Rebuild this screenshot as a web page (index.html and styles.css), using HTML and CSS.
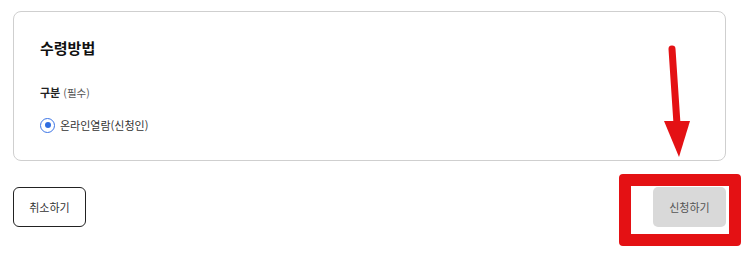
FILE: index.html
```html
<!DOCTYPE html>
<html lang="ko">
<head>
<meta charset="utf-8">
<link rel="stylesheet" href="styles.css">
</head>
<body>
<div class="page">
  <section class="card">
    <h2 class="title">수령방법</h2>
    <div class="field-label">구분 <span class="req">(필수)</span></div>
    <label class="radio-row">
      <span class="radio"><span class="dot"></span></span>
      <span class="radio-text">온라인열람(신청인)</span>
    </label>
  </section>
  <div class="actions">
    <button class="btn btn-cancel">취소하기</button>
    <button class="btn btn-submit">신청하기</button>
  </div>
</div>
<div class="highlight"></div>
<svg class="arrow" width="745" height="260" viewBox="0 0 745 260">
  <line x1="672" y1="49" x2="677" y2="124" stroke="#e41114" stroke-width="7" stroke-linecap="round"/>
  <polygon points="664,121 690,121 679,157" fill="#e41114"/>
</svg>
</body>
</html>
```

FILE: styles.css
```css
html, body {
  margin: 0;
  padding: 0;
  background: #fff;
}
body {
  font-family: "Noto Sans CJK KR", "Noto Sans", sans-serif;
  color: #222;
  position: relative;
  width: 745px;
  height: 260px;
  overflow: hidden;
}
.page {
  padding: 11px 0 0 13px;
  width: 713px;
}
.card {
  box-sizing: border-box;
  height: 150px;
  border: 1px solid #cfcfcf;
  border-radius: 8px;
  padding: 25px 26px 0 26px;
}
.title {
  margin: 0;
  font-size: 15px;
  font-weight: 700;
  line-height: 22px;
  color: #111;
}
.field-label {
  margin-top: 25px;
  font-size: 11px;
  font-weight: 700;
  line-height: 16px;
  color: #222;
}
.req {
  font-size: 10.5px;
  font-weight: 400;
  color: #555;
}
.radio-row {
  display: flex;
  align-items: center;
  gap: 5px;
  margin-top: 16px;
  margin-left: 0;
}
.radio {
  box-sizing: border-box;
  width: 15px;
  height: 15px;
  border: 1.5px solid #3b74e6;
  border-radius: 50%;
  display: flex;
  align-items: center;
  justify-content: center;
}
.dot {
  width: 6px;
  height: 6px;
  border-radius: 50%;
  background: #2f6de0;
}
.radio-text {
  font-size: 11px;
  line-height: 16px;
  color: #333;
}
.actions {
  display: flex;
  justify-content: space-between;
  margin-top: 26px;
}
.btn {
  box-sizing: border-box;
  width: 73px;
  height: 40px;
  font-family: inherit;
  font-size: 11px;
  border-radius: 6px;
  padding: 0;
}
.btn-cancel {
  background: #fff;
  border: 1px solid #222;
  color: #333;
}
.btn-submit {
  background: #d9d9d9;
  border: none;
  color: #555;
  border-radius: 5px;
}
.highlight {
  position: absolute;
  left: 619px;
  top: 174px;
  width: 122px;
  height: 72px;
  box-sizing: border-box;
  border: 12px solid #e41114;
  border-radius: 4px;
}
.arrow {
  position: absolute;
  left: 0;
  top: 0;
  pointer-events: none;
}
```
